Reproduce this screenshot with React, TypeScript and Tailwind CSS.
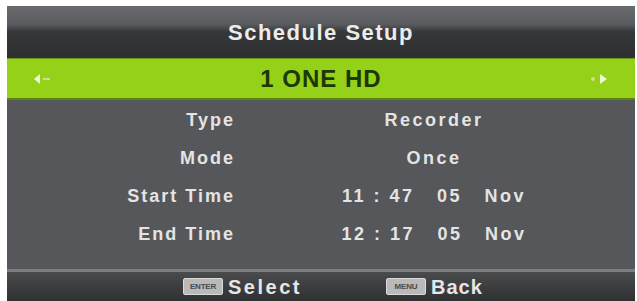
const rows = [
  { label: "Type", value: "Recorder" },
  { label: "Mode", value: "Once" },
  { label: "Start Time", value: "11 : 47   05   Nov" },
  { label: "End Time", value: "12 : 17   05   Nov" },
]

function Arrow({ dir }: { dir: "left" | "right" }) {
  return (
    <svg width="22" height="16" viewBox="0 0 22 16">
      {dir === "left" ? (
        <>
          <path d="M9 3 L3 8 L9 13 Z" fill="#eef7d8" />
          <rect x="12" y="7" width="7" height="2" fill="#c6e58a" />
        </>
      ) : (
        <>
          <circle cx="4" cy="8" r="2" fill="#c6e58a" />
          <path d="M11 3 L18 8 L11 13 Z" fill="#eef7d8" />
        </>
      )}
    </svg>
  )
}

function KeyCap({ text }: { text: string }) {
  return (
    <span className="inline-flex items-center justify-center h-[17px] w-[40px] rounded-[2px] border border-[#dadada] bg-[#b9b9b9] text-[8px] font-bold tracking-tight text-[#4a4a4a] leading-none">
      {text}
    </span>
  )
}

export default function App() {
  return (
    <div
      className="w-[637px] h-[301px] bg-white pl-[7px] pt-[6px] pr-[2px] overflow-hidden"
      style={{ fontFamily: '"Liberation Sans", Arial, sans-serif' }}
    >
      <div className="h-full flex flex-col bg-[#55575a]">
        <div className="h-[52px] shrink-0 flex items-center justify-center bg-[linear-gradient(to_bottom,#6a6b6e_0%,#5a5b5e_35%,#363739_50%,#2e2f31_100%)]">
          <span className="text-[22px] font-bold text-[#ececec] tracking-[1.5px]">
            Schedule Setup
          </span>
        </div>
        <div className="h-[42px] shrink-0 flex items-center justify-between px-[24px] bg-[#95d118] border-t border-[#6d9a12] border-b-2 border-b-[#5b8210]">
          <Arrow dir="left" />
          <span className="text-[24px] font-bold text-[#1b3806] tracking-[1px]">1 ONE HD</span>
          <Arrow dir="right" />
        </div>
        <div className="flex-1 flex flex-col pt-[1px]">
          {rows.map((r) => (
            <div
              key={r.label}
              className="h-[38px] flex items-center text-[18px] font-bold text-[#e4e4e4]"
            >
              <div className="w-[228px] text-right tracking-[2px]">{r.label}</div>
              <div className="w-[398px] text-center whitespace-pre tracking-[2.5px]">{r.value}</div>
            </div>
          ))}
        </div>
        <div className="h-[32px] shrink-0 flex items-center border-t-[3px] border-[#7b7d7f] bg-[linear-gradient(to_bottom,#4a4b4d,#2f3032)]">
          <div className="flex items-center gap-[5px] ml-[176px]">
            <KeyCap text="ENTER" />
            <span className="text-[20px] font-bold text-[#e6e6e6] tracking-[2.5px]">Select</span>
          </div>
          <div className="flex items-center gap-[5px] ml-[84px]">
            <KeyCap text="MENU" />
            <span className="text-[20px] font-bold text-[#e6e6e6] tracking-[1px]">Back</span>
          </div>
        </div>
      </div>
    </div>
  )
}
